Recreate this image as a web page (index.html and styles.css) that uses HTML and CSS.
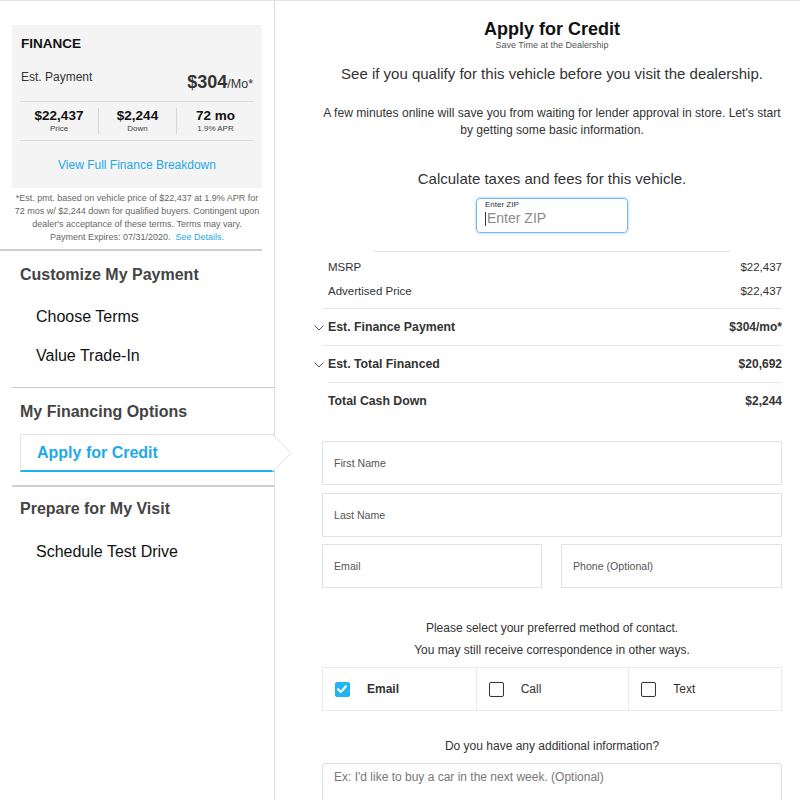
FILE: index.html
```html
<!DOCTYPE html>
<html>
<head>
<meta charset="utf-8">
<link rel="stylesheet" href="styles.css">
</head>
<body>
<div class="page">
  <aside class="sidebar">
    <div class="card">
      <div class="fin-title">FINANCE</div>
      <div class="est-row">
        <span class="est-label">Est. Payment</span>
        <span class="est-value"><b>$304</b><small>/Mo*</small></span>
      </div>
      <div class="stats">
        <div class="stat"><div class="stat-val">$22,437</div><div class="stat-lbl">Price</div></div>
        <div class="stat"><div class="stat-val">$2,244</div><div class="stat-lbl">Down</div></div>
        <div class="stat"><div class="stat-val">72 mo</div><div class="stat-lbl">1.9% APR</div></div>
      </div>
      <div class="card-link">View Full Finance Breakdown</div>
    </div>
    <p class="disclaimer">*Est. pmt. based on vehicle price of $22,437 at 1.9% APR for<br>72 mos w/ $2,244 down for qualified buyers. Contingent upon<br>dealer's acceptance of these terms. Terms may vary.<br>Payment Expires: 07/31/2020. &nbsp;<span class="blue">See Details.</span></p>

    <div class="nav-group first">
      <div class="nav-head">Customize My Payment</div>
      <div class="nav-item">Choose Terms</div>
      <div class="nav-item">Value Trade-In</div>
    </div>
    <div class="nav-group mid">
      <div class="nav-head">My Financing Options</div>
      <div class="nav-active">
        <span>Apply for Credit</span>
        <svg class="arrow" width="22" height="40" viewBox="0 0 22 40"><polyline points="0.5,0.5 19.5,19 0.5,37.5" fill="#fff" stroke="#e2e2e2" stroke-width="1"/></svg>
      </div>
    </div>
    <div class="nav-group last">
      <div class="nav-head">Prepare for My Visit</div>
      <div class="nav-item">Schedule Test Drive</div>
    </div>
  </aside>

  <main class="main">
    <h1 class="title">Apply for Credit</h1>
    <div class="subtitle">Save Time at the Dealership</div>
    <div class="lead">See if you qualify for this vehicle before you visit the dealership.</div>
    <p class="intro">A few minutes online will save you from waiting for lender approval in store. Let's start by getting some basic information.</p>
    <div class="lead calc">Calculate taxes and fees for this vehicle.</div>
    <div class="zip">
      <div class="zip-label">Enter ZIP</div>
      <div class="zip-ph"><span class="caret"></span>Enter ZIP</div>
    </div>
    <div class="short-rule"></div>

    <div class="price-rows">
      <div class="row small"><span>MSRP</span><span>$22,437</span></div>
      <div class="row small adv"><span>Advertised Price</span><span>$22,437</span></div>
      <div class="row bold bt"><span class="lbl"><svg class="chev" width="10" height="6" viewBox="0 0 10 6"><polyline points="0.5,0.5 5,5 9.5,0.5" fill="none" stroke="#555" stroke-width="1"/></svg>Est. Finance Payment</span><span class="amt">$304/mo*</span></div>
      <div class="row bold bt"><span class="lbl"><svg class="chev" width="10" height="6" viewBox="0 0 10 6"><polyline points="0.5,0.5 5,5 9.5,0.5" fill="none" stroke="#555" stroke-width="1"/></svg>Est. Total Financed</span><span class="amt">$20,692</span></div>
      <div class="row bold bt inset"><span>Total Cash Down</span><span class="amt">$2,244</span></div>
    </div>

    <div class="form">
      <div class="field">First Name</div>
      <div class="field second">Last Name</div>
      <div class="field-pair">
        <div class="field">Email</div>
        <div class="field">Phone (Optional)</div>
      </div>
    </div>

    <p class="contact-note">Please select your preferred method of contact.</p>
    <p class="contact-note second">You may still receive correspondence in other ways.</p>

    <div class="contact">
      <div class="opt"><span class="cb checked"><svg width="14" height="14" viewBox="0 0 14 14"><polyline points="3,7.2 5.8,10 11,4.2" fill="none" stroke="#fff" stroke-width="2.2" stroke-linecap="round" stroke-linejoin="round"/></svg></span><span class="opt-lbl strong">Email</span></div>
      <div class="opt"><span class="cb"></span><span class="opt-lbl">Call</span></div>
      <div class="opt"><span class="cb"></span><span class="opt-lbl">Text</span></div>
    </div>

    <p class="extra-q">Do you have any additional information?</p>
    <div class="textarea">Ex: I'd like to buy a car in the next week. (Optional)</div>
  </main>
</div>
</body>
</html>
```

FILE: styles.css
```css
* { box-sizing: border-box; }
html, body { margin: 0; padding: 0; background: #fff; }
body {
  font-family: "Liberation Sans", Arial, Helvetica, sans-serif;
  color: #333;
  width: 800px;
  height: 800px;
  overflow: hidden;
}
.page {
  display: flex;
  border-top: 1px solid #e4e4e4;
  height: 800px;
}
.sidebar {
  width: 275px;
  flex: none;
  border-right: 1px solid #dedede;
  padding-top: 24px;
}
.card {
  background: #f4f4f4;
  margin: 0 12px;
  width: 250px;
  padding: 10px 8px 0;
}
.fin-title {
  font-size: 13.5px;
  font-weight: bold;
  line-height: 17px;
  color: #111;
  padding-left: 1px;
}
.est-row {
  display: flex;
  justify-content: space-between;
  align-items: flex-start;
  margin-top: 16px;
  padding: 0 1px 5px;
  border-bottom: 1px solid #dcdcdc;
}
.est-label { font-size: 12px; line-height: 16px; color: #333; margin-top: 1px; }
.est-value { margin-top: 2px; line-height: 24px; color: #333; }
.est-value b { font-size: 18px; }
.est-value small { font-size: 12.5px; }
.stats {
  display: grid;
  grid-template-columns: 1fr 1fr 1fr;
  border-bottom: 1px solid #dcdcdc;
  padding: 6px 0;
}
.stat { text-align: center; }
.stat + .stat { border-left: 1px solid #d6d6d6; }
.stat-val { font-size: 13.5px; font-weight: bold; line-height: 16px; color: #111; }
.stat-lbl { font-size: 8px; line-height: 10px; color: #444; }
.card-link {
  color: #1fa8e6;
  font-size: 12px;
  line-height: 16px;
  text-align: center;
  padding: 16px 0 15px;
}
.blue { color: #1fa8e6; }
.disclaimer {
  margin: 4px 12px 0;
  width: 250px;
  font-size: 9px;
  line-height: 13px;
  color: #666;
  text-align: center;
  white-space: nowrap;
}
.nav-group { padding-left: 12px; }
.nav-group.first {
  margin-top: 5px;
  border-top: 2px solid #cfcfcf;
  margin-right: 12px;
  padding-top: 15px;
  padding-bottom: 22px;
}
.nav-group.mid {
  border-top: 1px solid #c8c8c8;
  margin-left: 12px;
  padding-left: 0;
  padding-top: 15px;
  padding-bottom: 13px;
  border-bottom: 2px solid #cfcfcf;
}
.nav-group.last {
  margin-left: 0;
  padding-top: 13px;
}
.nav-head {
  font-size: 16px;
  font-weight: bold;
  color: #444;
  line-height: 18px;
  padding-left: 8px;
}
.nav-item {
  font-size: 16px;
  color: #111;
  line-height: 18px;
  padding-left: 24px;
  margin-top: 24px;
}
.nav-group.first .nav-item + .nav-item { margin-top: 21px; }
.nav-group.last .nav-item { margin-top: 25px; }
.nav-active {
  position: relative;
  margin: 13px 0 0 8px;
  height: 38px;
  border: 1px solid #e4e4e4;
  border-right: 0;
  border-bottom: 2px solid #1fb0ee;
  display: flex;
  align-items: center;
  padding-left: 16px;
  font-size: 16px;
  font-weight: bold;
  color: #1ea9ea;
}
.arrow {
  position: absolute;
  right: -20px;
  top: -1px;
}

.main {
  flex: 1;
  padding: 0 18px 0 47px;
  text-align: center;
}
.title {
  margin: 17px 0 0;
  font-size: 18px;
  line-height: 22px;
  color: #111;
}
.subtitle { font-size: 9px; line-height: 10px; color: #555; }
.lead {
  font-size: 15px;
  line-height: 18px;
  color: #333;
  margin-top: 15px;
}
.intro {
  margin: 22px -2px 0;
  font-size: 12.1px;
  line-height: 17px;
  color: #333;
}
.lead.calc { margin-top: 31px; }
.zip {
  width: 152px;
  height: 35px;
  margin: 10px auto 0;
  border: 1px solid #74b9ef;
  border-radius: 4px;
  box-shadow: 0 0 3px rgba(90, 160, 240, 0.6);
  text-align: left;
  padding: 1px 0 0 8px;
}
.zip-label { font-size: 8px; line-height: 10px; color: #333; }
.zip-ph {
  font-size: 14px;
  line-height: 17px;
  color: #8a8a8a;
  display: flex;
  align-items: center;
}
.caret {
  display: inline-block;
  width: 1px;
  height: 14px;
  background: #333;
  margin-right: 1px;
}
.short-rule {
  width: 357px;
  margin: 18px 0 0 51px;
  border-top: 1px solid #e2e2e2;
}
.price-rows { text-align: left; }
.row {
  display: flex;
  justify-content: space-between;
  align-items: center;
  padding-left: 6px;
}
.row.small { font-size: 11.5px; color: #333; height: 24px; }
.row.small:first-child { margin-top: 3px; }
.row.adv { margin-bottom: 5px; }
.row.bold { font-size: 12.3px; font-weight: bold; color: #333; height: 37px; }
.amt { font-size: 12px; }
.bt { border-top: 1px solid #e6e6e6; }
.row.inset { margin-left: 6px; padding-left: 0; }
.lbl { position: relative; }
.chev { position: absolute; left: -14px; top: 5px; }

.form { margin-top: 22px; display: flex; flex-direction: column; gap: 7px; }
.field {
  height: 44px;
  border: 1px solid #e2e2e2;
  font-size: 10.6px;
  color: #555;
  text-align: left;
  padding-left: 11px;
  display: flex;
  align-items: center;
}
.field.second { margin-top: 1px; }
.field-pair { display: grid; grid-template-columns: 220px 221px; justify-content: space-between; }
.contact-note {
  margin: 33px 0 0;
  font-size: 12px;
  line-height: 15px;
  color: #333;
}
.contact-note.second { margin-top: 7px; }
.contact {
  margin-top: 9px;
  display: grid;
  grid-template-columns: 1fr 1fr 1fr;
  border: 1px solid #eaeaea;
  height: 44px;
}
.opt {
  display: flex;
  align-items: center;
  padding-left: 12px;
}
.opt + .opt { border-left: 1px solid #eaeaea; }
.cb {
  width: 15px;
  height: 15px;
  border: 1px solid #333;
  border-radius: 2px;
  flex: none;
  display: flex;
}
.cb.checked { background: #1fb4f3; border-color: #1fb4f3; }
.cb.checked svg { margin: -1px 0 0 -1px; }
.opt-lbl { margin-left: 17px; font-size: 12px; color: #333; }
.opt-lbl.strong { font-weight: bold; }
.extra-q {
  margin: 28px 0 0;
  font-size: 12px;
  line-height: 15px;
  color: #333;
}
.textarea {
  margin-top: 9px;
  height: 60px;
  border: 1px solid #dedede;
  border-radius: 3px;
  font-size: 12px;
  color: #777;
  text-align: left;
  padding: 6px 0 0 11px;
}
```
